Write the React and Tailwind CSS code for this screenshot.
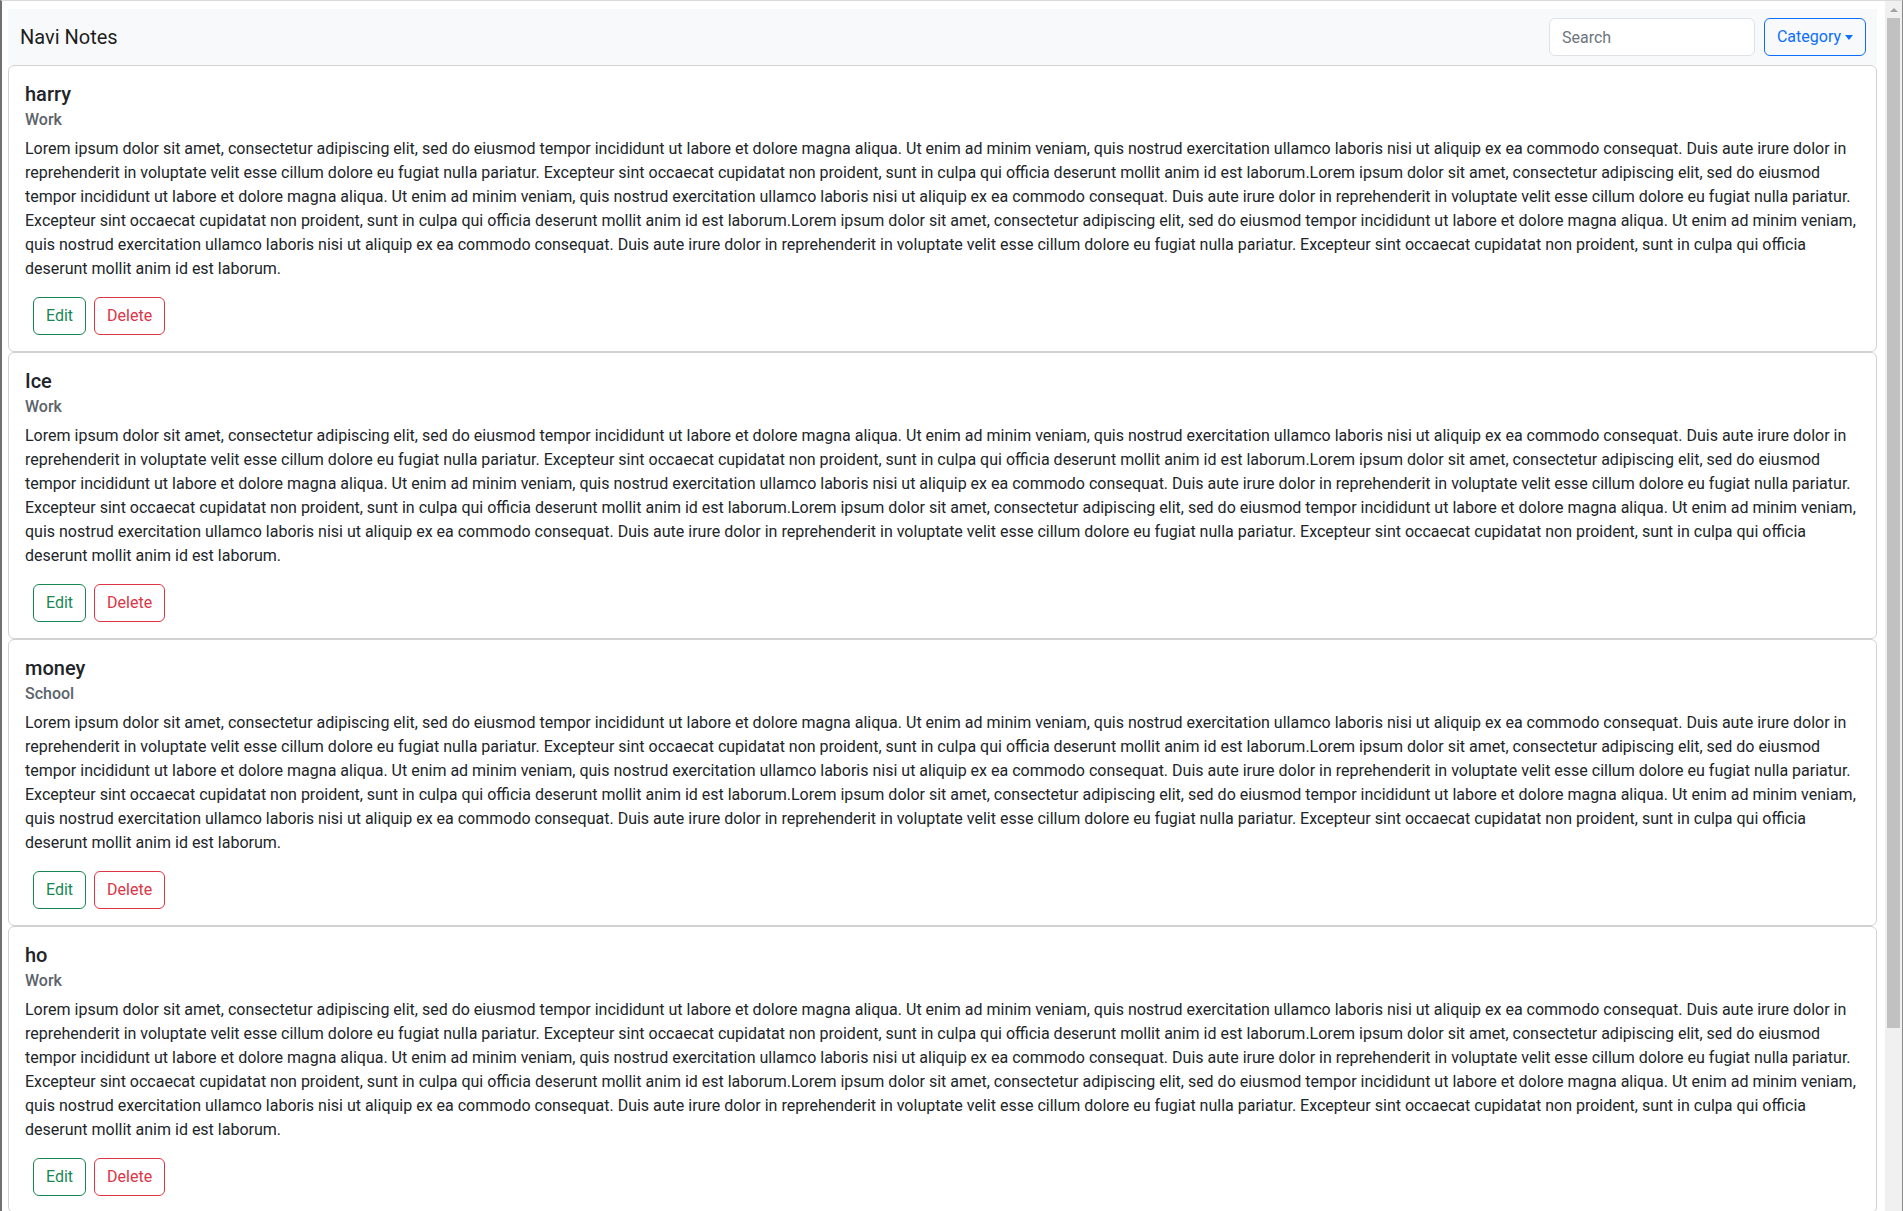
const LINES = [
  "Lorem ipsum dolor sit amet, consectetur adipiscing elit, sed do eiusmod tempor incididunt ut labore et dolore magna aliqua. Ut enim ad minim veniam, quis nostrud exercitation ullamco laboris nisi ut aliquip ex ea commodo consequat. Duis aute irure dolor in",
  "reprehenderit in voluptate velit esse cillum dolore eu fugiat nulla pariatur. Excepteur sint occaecat cupidatat non proident, sunt in culpa qui officia deserunt mollit anim id est laborum.Lorem ipsum dolor sit amet, consectetur adipiscing elit, sed do eiusmod",
  "tempor incididunt ut labore et dolore magna aliqua. Ut enim ad minim veniam, quis nostrud exercitation ullamco laboris nisi ut aliquip ex ea commodo consequat. Duis aute irure dolor in reprehenderit in voluptate velit esse cillum dolore eu fugiat nulla pariatur.",
  "Excepteur sint occaecat cupidatat non proident, sunt in culpa qui officia deserunt mollit anim id est laborum.Lorem ipsum dolor sit amet, consectetur adipiscing elit, sed do eiusmod tempor incididunt ut labore et dolore magna aliqua. Ut enim ad minim veniam,",
  "quis nostrud exercitation ullamco laboris nisi ut aliquip ex ea commodo consequat. Duis aute irure dolor in reprehenderit in voluptate velit esse cillum dolore eu fugiat nulla pariatur. Excepteur sint occaecat cupidatat non proident, sunt in culpa qui officia",
  "deserunt mollit anim id est laborum.",
];

const notes = [
  { id: 1, title: "harry", tag: "Work" },
  { id: 2, title: "Ice", tag: "Work" },
  { id: 3, title: "money", tag: "School" },
  { id: 4, title: "ho", tag: "Work" },
];

function NoteCard({ note }) {
  return (
    <div className="border border-[#d2d2d2] rounded-[6px] bg-white p-4">
      <h5 className="text-[20px] leading-[24px] font-medium text-[#212529] mb-2">{note.title}</h5>
      <h6 className="text-[16px] leading-[19px] font-medium text-[#5c636a] -mt-1 mb-2">{note.tag}</h6>
      <p className="text-[16px] leading-6 text-[#212529] mb-4">
        {LINES.map((l, i) => (
          <span key={i} className="block whitespace-nowrap">{l}</span>
        ))}
      </p>
      <div className="flex">
        <button className="h-[38px] px-3 ml-2 mr-2 border border-[#198754] text-[#198754] rounded-[6px] text-[16px]">Edit</button>
        <button className="h-[38px] px-3 border border-[#dc3545] text-[#dc3545] rounded-[6px] text-[16px]">Delete</button>
      </div>
    </div>
  );
}

export default function App() {
  return (
    <div
      className="h-[1211px] overflow-hidden flex border-t border-t-[#d9d9d9] border-l-2 border-l-[#707070] border-r border-r-[#8a8a8a] bg-white"
      style={{ fontFamily: "Roboto, 'Liberation Sans', sans-serif" }}
    >
      <main className="flex-1 min-w-0 pl-[6px] pr-2 pt-2">
        {/* Navbar */}
        <nav className="h-[56px] bg-[#f8f9fa] flex items-center justify-between pl-3 pr-[11px]">
          <span className="text-[20px] text-black/90">Navi Notes</span>
          <div className="flex items-center gap-[9px]">
            <input
              placeholder="Search"
              className="w-[206px] h-[38px] border border-[#dee2e6] rounded-[6px] bg-white px-3 text-[16px] placeholder:text-[#6c757d] outline-none"
            />
            <button className="h-[38px] w-[102px] border border-[#0d6efd] rounded-[6px] text-[#0d6efd] text-[16px] flex items-center justify-center gap-[4px]">
              Category
              <span className="w-0 h-0 border-x-[4.5px] border-x-transparent border-t-[5px] border-t-[#0d6efd]" />
            </button>
          </div>
        </nav>

        {/* Notes */}
        <div className="flex flex-col">
          {notes.map((n) => (
            <NoteCard key={n.id} note={n} />
          ))}
        </div>
      </main>

      {/* Scrollbar */}
      <div className="w-[17px] shrink-0 bg-[#f0f0f0] flex flex-col">
        <div className="h-[17px] flex items-center justify-center">
          <span className="w-0 h-0 border-x-[4px] border-x-transparent border-b-[4px] border-b-[#a3a3a3]" />
        </div>
        <div className="mx-[2px] h-[1010px] bg-[#c1c1c1]" />
      </div>
    </div>
  );
}
